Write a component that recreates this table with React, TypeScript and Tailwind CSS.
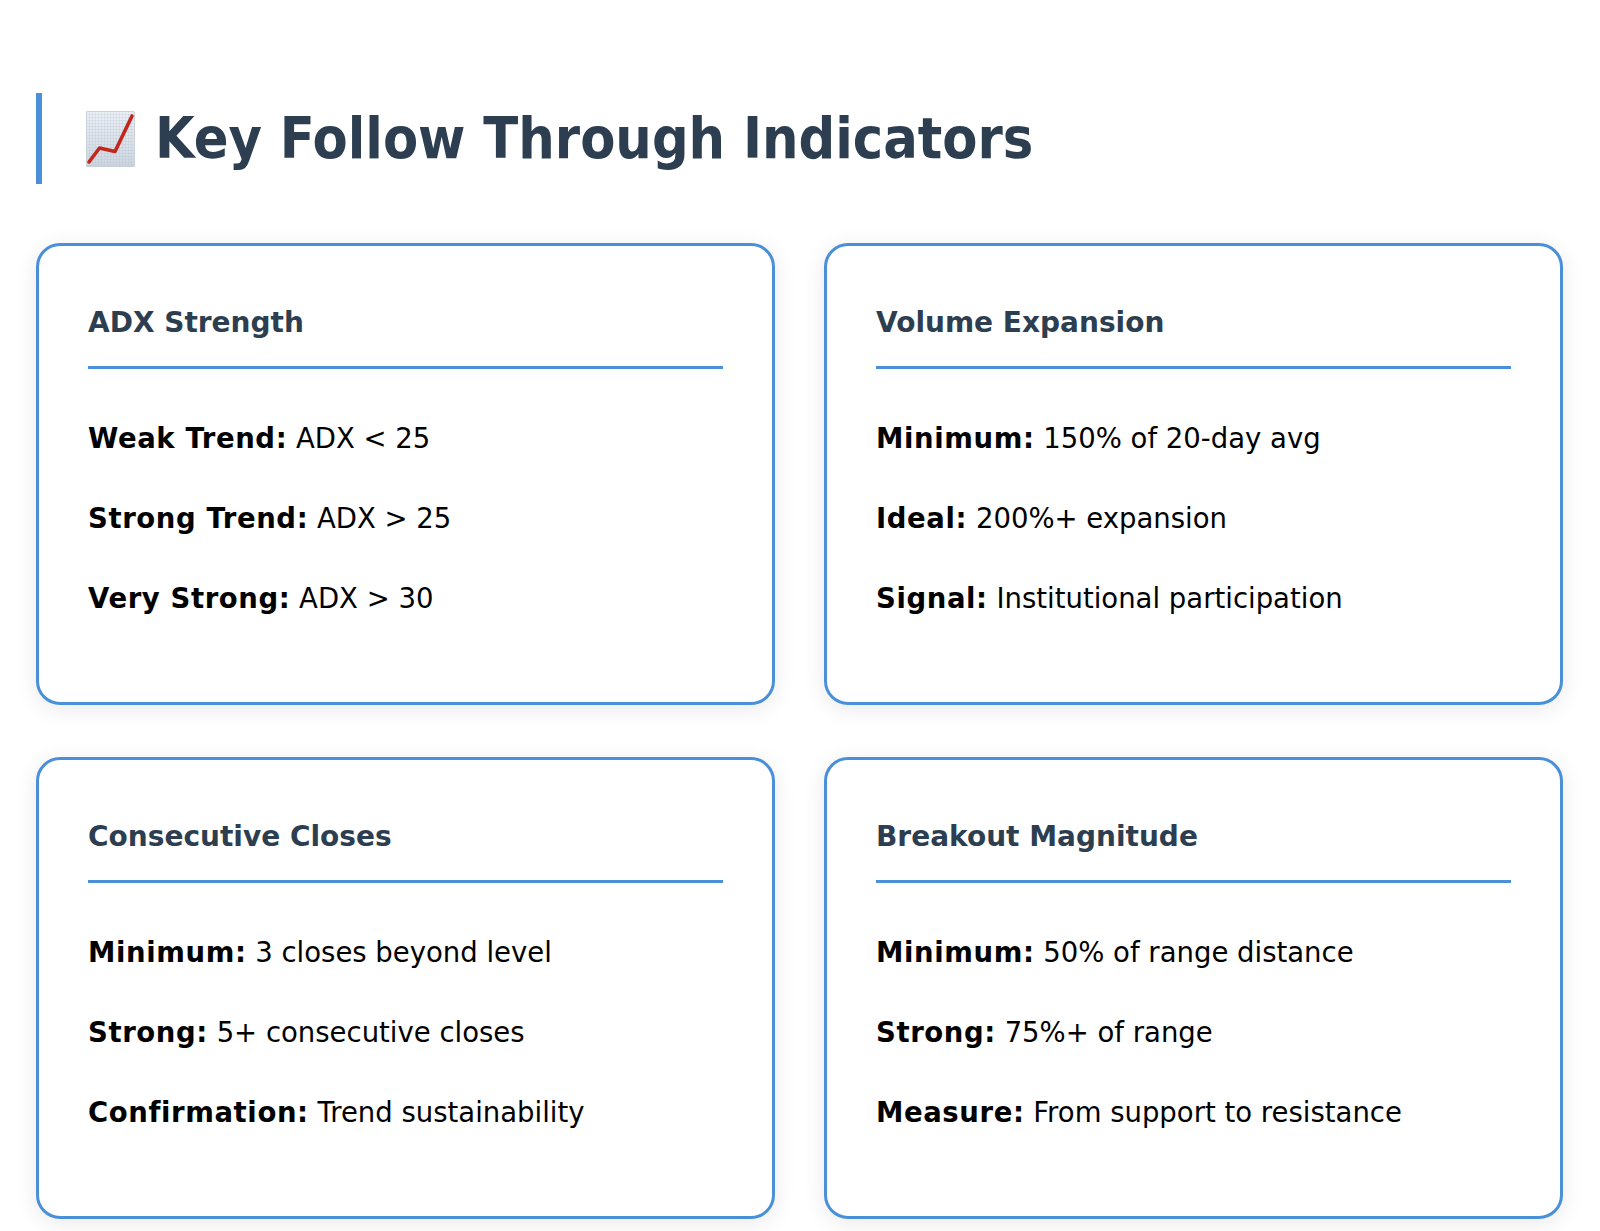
import React from 'react';

type Row = { label: string; value: string };
type Indicator = { title: string; rows: Row[] };

const INDICATORS: Indicator[] = [
    {
        title: 'ADX Strength',
        rows: [
            { label: 'Weak Trend:', value: 'ADX < 25' },
            { label: 'Strong Trend:', value: 'ADX > 25' },
            { label: 'Very Strong:', value: 'ADX > 30' },
        ],
    },
    {
        title: 'Volume Expansion',
        rows: [
            { label: 'Minimum:', value: '150% of 20-day avg' },
            { label: 'Ideal:', value: '200%+ expansion' },
            { label: 'Signal:', value: 'Institutional participation' },
        ],
    },
    {
        title: 'Consecutive Closes',
        rows: [
            { label: 'Minimum:', value: '3 closes beyond level' },
            { label: 'Strong:', value: '5+ consecutive closes' },
            { label: 'Confirmation:', value: 'Trend sustainability' },
        ],
    },
    {
        title: 'Breakout Magnitude',
        rows: [
            { label: 'Minimum:', value: '50% of range distance' },
            { label: 'Strong:', value: '75%+ of range' },
            { label: 'Measure:', value: 'From support to resistance' },
        ],
    },
];

function ChartEmoji() {
    return (
        <svg width="49" height="56" viewBox="0 0 49 56" className="shrink-0">
            <defs>
                <linearGradient id="chartBg" x1="0" y1="0" x2="0" y2="1">
                    <stop offset="0" stopColor="#edf1f6" />
                    <stop offset="1" stopColor="#cdd6e0" />
                </linearGradient>
                <pattern id="chartGrid" width="3" height="3" patternUnits="userSpaceOnUse">
                    <path d="M3 0H0V3" fill="none" stroke="#a9b7c7" strokeWidth="0.6" />
                </pattern>
            </defs>
            <rect x="0" y="0" width="49" height="56" rx="1.5" fill="url(#chartBg)" />
            <rect x="0" y="0" width="49" height="56" rx="1.5" fill="url(#chartGrid)" opacity="0.8" />
            <rect x="0.5" y="0.5" width="48" height="55" rx="1.5" fill="none" stroke="#c9d1da" />
            <polyline
                points="3,51 13.5,37 29,40.5 46,5"
                fill="none"
                stroke="#c4261d"
                strokeWidth="3.6"
                strokeLinejoin="round"
                strokeLinecap="round"
            />
        </svg>
    );
}

function IndicatorCard({ item }: { item: Indicator }) {
    return (
        <div className="h-[462px] bg-white border-[3px] border-[#4a90d9] rounded-[24px] shadow-[0_4px_22px_rgba(0,0,0,0.09)] px-[49px] pt-[59px] font-['DejaVu_Sans',sans-serif]">
            <h3 className="text-[28px] leading-[36px] font-bold text-[#2c3e50] pb-[25px] border-b-[3px] border-[#4a90d9]">
                {item.title}
            </h3>
            <div className="flex flex-col gap-[40px] mt-[49px]">
                {item.rows.map(r => (
                    <p key={r.label} className="text-[27.5px] leading-[40px] text-black whitespace-nowrap">
                        <strong className="font-bold tracking-[0.6px]">{r.label}</strong> {r.value}
                    </p>
                ))}
            </div>
        </div>
    );
}

export default function App() {
    return (
        <div className="min-h-screen bg-white pl-[36px] pr-[37px] pt-[93px] pb-[12px] font-['DejaVu_Sans',sans-serif]">
            <h2 className="h-[91px] flex items-center gap-[20px] border-l-[6px] border-[#4a90d9] pl-[44px] text-[57px] font-bold text-[#2c3e50] whitespace-nowrap font-['DejaVu_Sans_Condensed','DejaVu_Sans',sans-serif]">
                <ChartEmoji />
                <span>Key Follow Through Indicators</span>
            </h2>

            <div className="grid grid-cols-2 gap-x-[49px] gap-y-[52px] mt-[59px]">
                {INDICATORS.map(item => (
                    <IndicatorCard key={item.title} item={item} />
                ))}
            </div>
        </div>
    );
}
